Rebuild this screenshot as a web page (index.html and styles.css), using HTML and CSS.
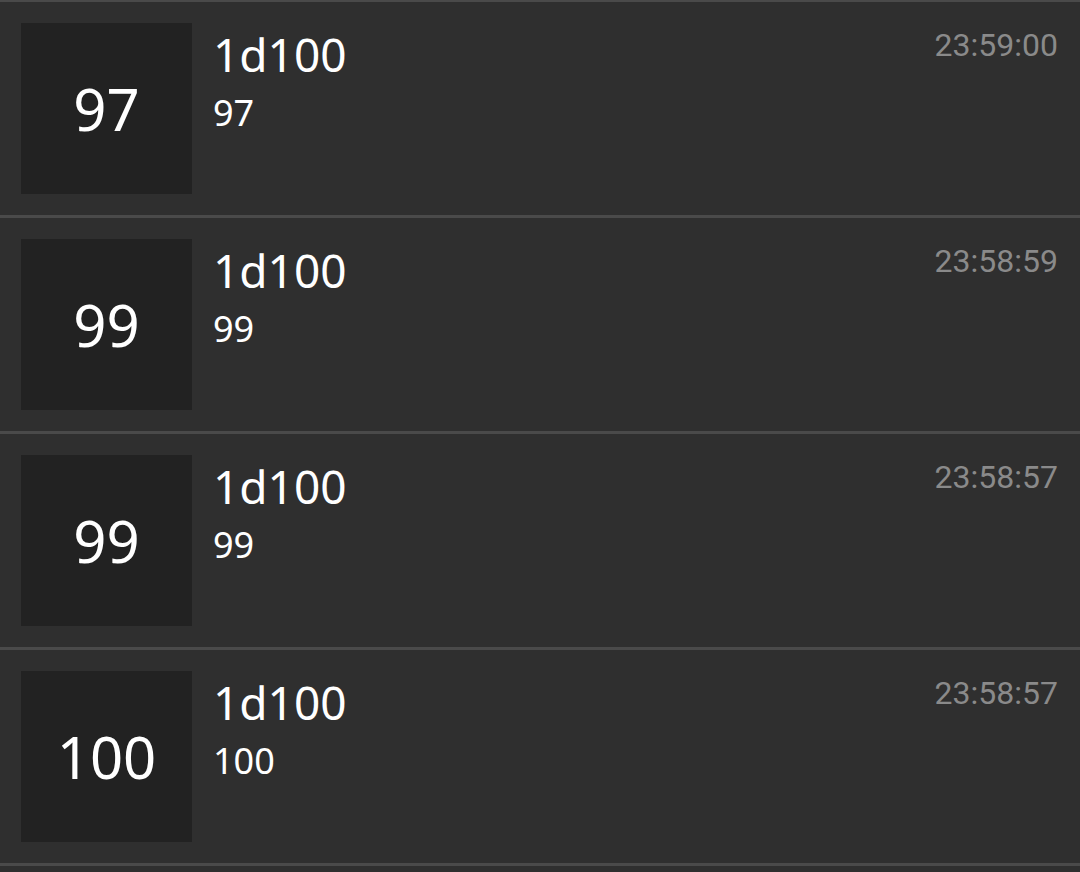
FILE: index.html
```html
<!DOCTYPE html>
<html lang="en">
<head>
  <meta charset="UTF-8" />
  <meta name="viewport" content="width=device-width, initial-scale=1.0" />
  <title>Roll history</title>
  <link rel="stylesheet" href="styles.css">
</head>
<body>
<div class="history">
  <div class="roll">
    <div class="result">97</div>
    <div class="detail">
      <div class="dice">1d100</div>
      <div class="rolls">97</div>
    </div>
    <div class="time">23:59:00</div>
  </div>

  <div class="roll">
    <div class="result">99</div>
    <div class="detail">
      <div class="dice">1d100</div>
      <div class="rolls">99</div>
    </div>
    <div class="time">23:58:59</div>
  </div>

  <div class="roll">
    <div class="result">99</div>
    <div class="detail">
      <div class="dice">1d100</div>
      <div class="rolls">99</div>
    </div>
    <div class="time">23:58:57</div>
  </div>

  <div class="roll">
    <div class="result">100</div>
    <div class="detail">
      <div class="dice">1d100</div>
      <div class="rolls">100</div>
    </div>
    <div class="time">23:58:57</div>
  </div>
</div>
</body>
</html>
```

FILE: styles.css
```css
* { box-sizing: border-box; margin: 0; padding: 0; }

body {
  font-family: "Noto Sans", sans-serif;
  background: #2f2f2f;
  color: #ffffff;
  height: 872px;
  overflow: hidden;
}

.history {
  margin-top: -1px;
}

.roll {
  display: flex;
  align-items: flex-start;
  height: 216px;
  padding: 21px 22px 0 21px;
  border-top: 3px solid #4a4a4a;
}
.roll:last-child {
  height: 219px;
  border-bottom: 3px solid #4a4a4a;
}

.result {
  width: 171px;
  height: 171px;
  flex-shrink: 0;
  background: #222222;
  display: flex;
  align-items: center;
  justify-content: center;
  font-size: 58px;
  line-height: 1;
}

.detail {
  flex: 1;
  padding-left: 21px;
}

.dice {
  font-size: 46px;
  line-height: 62px;
}

.rolls {
  font-size: 36px;
  line-height: 50px;
  margin-top: 3px;
}

.time {
  font-family: Roboto, sans-serif;
  font-size: 32px;
  color: #8a8a8a;
  line-height: 38px;
  margin-top: 3px;
}
```
